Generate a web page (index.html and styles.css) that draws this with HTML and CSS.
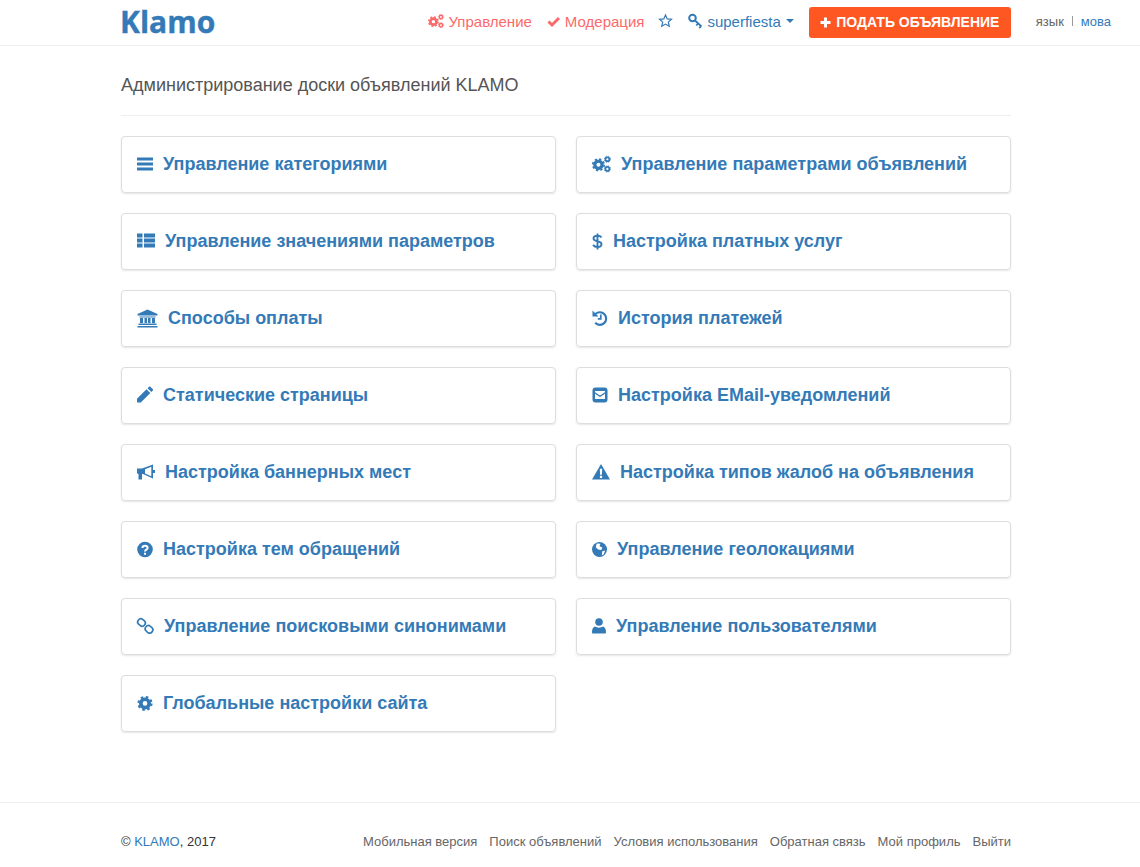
FILE: index.html
```html
<!DOCTYPE html>
<html lang="ru">
<head>
<meta charset="utf-8">
<title>Klamo</title>
<link rel="stylesheet" href="styles.css">
</head>
<body>
<svg class="defs" width="0" height="0" aria-hidden="true">
  <defs>
    <g id="gear">
      <circle cx="0" cy="0" r="4.500" fill="none" stroke="currentColor" stroke-width="4"/>
      <circle cx="0" cy="0" r="7" fill="none" stroke="currentColor" stroke-width="2.200" stroke-dasharray="2.750 2.750"/>
    </g>
    <g id="cogs">
      <g transform="translate(6.800 9.800) scale(.85)"><use href="#gear"/></g>
      <g transform="translate(16.200 4) scale(.46)"><use href="#gear"/></g>
      <g transform="translate(16.200 14.200) scale(.46)"><use href="#gear"/></g>
    </g>
  </defs>
</svg>
<header class="topbar">
  <div class="topbar-inner">
    <a class="logo" href="#">Klamo</a>
    <nav class="topnav">
      <a class="nav-link nav-red nav-manage" href="#"><svg width="16" height="16" viewBox="0 0 20 18"><use href="#cogs"/></svg>Управление</a>
      <a class="nav-link nav-red nav-moder" href="#"><svg width="15" height="16" viewBox="0 0 15 16"><path d="M2.500 8.500l3.500 3.500 7-7" fill="none" stroke="currentColor" stroke-width="3"/></svg>Модерация</a>
      <a class="nav-link nav-star" href="#"><svg width="15" height="16" viewBox="0 0 15 16"><path d="M7.500 2l1.700 3.900 4.300.4-3.200 2.800 1 4.200-3.800-2.200-3.800 2.200 1-4.200L1.500 6.300l4.300-.4z" fill="none" stroke="currentColor" stroke-width="1.200"/></svg></a>
      <a class="nav-link nav-user" href="#"><svg width="15" height="16" viewBox="0 0 15 16"><circle cx="4.500" cy="5" r="3.300" fill="none" stroke="currentColor" stroke-width="2"/><path d="M7 7.500l6.500 6M10 10.500l-1.700 2M13 13.200l-1.700 2" fill="none" stroke="currentColor" stroke-width="1.800"/></svg>superfiesta<span class="caret"></span></a>
      <a class="post-btn" href="#"><svg width="11" height="11" viewBox="0 0 11 11"><path d="M4 0.500h3v3.500h3.500v3H7v3.500H4V7H.5V4H4z" fill="currentColor"/></svg>ПОДАТЬ ОБЪЯВЛЕНИЕ</a>
    </nav>
    <div class="lang">
      <span>язык</span><span class="lang-sep"></span><a href="#">мова</a>
    </div>
  </div>
</header>

<main class="content">
  <h1 class="page-title">Администрирование доски объявлений KLAMO</h1>
  <div class="cards">
    <a class="card" href="#"><svg width="16" height="18" viewBox="0 0 16 18"><path d="M0 2.500h16v3H0zM0 7.500h16v3H0zM0 12.500h16v3H0z" fill="currentColor"/></svg>Управление категориями</a>
    <a class="card" href="#"><svg width="19" height="18" viewBox="0 0 20 18"><use href="#cogs"/></svg>Управление параметрами объявлений</a>

    <a class="card" href="#"><svg width="18" height="18" viewBox="0 0 18 18"><path d="M0 1.500h5.500v4H0zM7 1.500H18v4H7zM0 6.500h5.500v4H0zM7 6.500H18v4H7zM0 11.500h5.500v4H0zM7 11.500H18v4H7z" fill="currentColor"/></svg>Управление значениями параметров</a>
    <a class="card" href="#"><svg width="11" height="18" viewBox="0 0 11 18"><path d="M9.500 5.500C8.700 4.200 7.200 3.700 5.500 3.700 3.300 3.700 1.500 4.700 1.500 6.400c0 3.800 8 1.800 8 5.600 0 1.900-1.900 3-4 3-1.900 0-3.500-.7-4.500-2.100M5.500 1.500v16" fill="none" stroke="currentColor" stroke-width="1.900"/></svg>Настройка платных услуг</a>

    <a class="card" href="#"><svg width="21" height="20" viewBox="0 0 21 20"><path d="M10.500 1.500L20.500 6v1.500H.5V6z" fill="currentColor"/><path d="M2.500 8.500h16v1h-16zM3 10h3v5H3zM7.500 10h2.500v5H7.500zM11 10h2.500v5H11zM15 10h3v5h-3zM1.500 15.500h18V17h-18zM.5 18h20v1.500H.5z" fill="currentColor"/></svg>Способы оплаты</a>
    <a class="card" href="#"><svg width="16" height="18" viewBox="0 0 16 18"><path d="M3.500 5A6.300 6.300 0 1 1 3.200 13.800" fill="none" stroke="currentColor" stroke-width="2.200"/><path d="M.5 1.500V7.500H6.500z" fill="currentColor"/><path d="M8.800 5.500v4.300H5.800" fill="none" stroke="currentColor" stroke-width="1.700"/></svg>История платежей</a>

    <a class="card" href="#"><svg width="16" height="18" viewBox="0 0 16 18"><path d="M0 16.500v-3.800L9.500 3.200l3.800 3.800-9.500 9.500z M10.500 2.200l1.400-1.300c.5-.5 1.200-.5 1.700 0l2.100 2.100c.5.500.5 1.200 0 1.700L14.300 6z" fill="currentColor"/></svg>Статические страницы</a>
    <a class="card" href="#"><svg width="16" height="18" viewBox="0 0 16 18"><rect x=".5" y="1.500" width="15" height="15" rx="3" fill="currentColor"/><path d="M3 5h10v1.300L8 9.500 3 6.300zM3 7.800l5 3.200 5-3.200V13H3z" fill="#fff"/></svg>Настройка EMail-уведомлений</a>

    <a class="card" href="#"><svg width="18" height="18" viewBox="0 0 18 18"><path fill-rule="evenodd" d="M0 5.500h5L16 1.500v14L6 11H5v5.500H1.500V11H1L0 10zM8 6.200v4.400l6.300 2.700V3.800z" fill="currentColor"/><path d="M16 7h2v3h-2z" fill="currentColor"/></svg>Настройка баннерных мест</a>
    <a class="card" href="#"><svg width="18" height="18" viewBox="0 0 18 18"><path d="M9 1L18 16.500H0z" fill="currentColor"/><path d="M7.800 5.800h2.400l-.3 6H8.100zM7.900 12.800h2.200V15H7.900z" fill="#fff"/></svg>Настройка типов жалоб на объявления</a>

    <a class="card" href="#"><svg width="16" height="18" viewBox="0 0 16 18"><circle cx="8" cy="9.500" r="7.800" fill="currentColor"/><path d="M5.500 8C5.500 6.500 6.600 5.700 8 5.700s2.600.9 2.600 2.200c0 1.800-2.600 1.700-2.600 3.600" fill="none" stroke="#fff" stroke-width="2"/><path d="M7 12.700h2v2H7z" fill="#fff"/></svg>Настройка тем обращений</a>
    <a class="card" href="#"><svg width="15" height="18" viewBox="0 0 16 18"><circle cx="8" cy="9.500" r="8" fill="currentColor"/><path d="M5 3l4 .5-1 2.500 3 1.500-1 2.500-3.500-.5L4 7zM11 11.500l3-1-1.500 4-2 1.500z" fill="#fff"/></svg>Управление геолокациями</a>

    <a class="card" href="#"><svg width="17" height="18" viewBox="0 0 17 18"><g fill="none" stroke="currentColor" stroke-width="1.600"><rect x="-4" y="-3.200" width="8" height="6.400" rx="3.200" transform="translate(4.500 5.500) rotate(40)"/><rect x="-4" y="-3.200" width="8" height="6.400" rx="3.200" transform="translate(12 12.300) rotate(40)"/></g></svg>Управление поисковыми синонимами</a>
    <a class="card" href="#"><svg width="14" height="18" viewBox="0 0 14 18"><circle cx="7" cy="5" r="3.800" fill="currentColor"/><path d="M0 15.500c0-1 0-5 3-6 1 .7 2.500 1.200 4 1.200s3-.5 4-1.200c3 1 3 5 3 6 0 .5-.5 1-1 1H1c-.5 0-1-.5-1-1z" fill="currentColor"/></svg>Управление пользователями</a>

    <a class="card" href="#"><svg width="16" height="18" viewBox="0 0 18 18"><g transform="translate(9 9.500) scale(1.050)"><use href="#gear"/></g></svg>Глобальные настройки сайта</a>
  </div>
</main>

<footer class="footer">
  <div class="footer-inner">
    <div class="copy">© <a href="#">KLAMO</a>, 2017</div>
    <nav class="footer-nav">
      <a href="#">Мобильная версия</a>
      <a href="#">Поиск объявлений</a>
      <a href="#">Условия использования</a>
      <a href="#">Обратная связь</a>
      <a href="#">Мой профиль</a>
      <a href="#">Выйти</a>
    </nav>
  </div>
</footer>
</body>
</html>
```

FILE: styles.css
```css
* { box-sizing: border-box; }
html, body { margin: 0; padding: 0; }
body {
  font-family: "Liberation Sans", Arial, sans-serif;
  background: #fff;
  color: #333;
  min-height: 867px;
  display: flex;
  flex-direction: column;
}
a { text-decoration: none; color: #337ab7; }
.defs { display: block; width: 0; height: 0; }

.topbar {
  height: 46px;
  border-bottom: 1px solid #eee;
  padding-left: 121px;
}
.topbar-inner {
  display: flex;
  align-items: flex-start;
  height: 45px;
  width: 990px;
}
.logo {
  font-family: "Open Sans", sans-serif;
  font-weight: 700;
  font-size: 30px;
  line-height: 44px;
  margin-left: -1px;
  -webkit-text-stroke: .4px #337ab7;
}
.topnav {
  margin-left: auto;
  display: flex;
  align-items: center;
  height: 45px;
}
.nav-link {
  display: flex;
  align-items: center;
  gap: 4px;
  font-size: 15px;
  margin: -3px 15px 0 0;
}
.nav-manage, .nav-moder { margin-right: 14px; }
.nav-star { margin-right: 15px; }
.nav-red { color: #fb6a6a; }
.caret {
  width: 0;
  height: 0;
  border-top: 4px solid #337ab7;
  border-left: 4px solid transparent;
  border-right: 4px solid transparent;
  margin-left: 1px;
}
.post-btn {
  display: flex;
  align-items: center;
  justify-content: center;
  gap: 5px;
  width: 202px;
  height: 31px;
  margin-top: -1px;
  background: #ff5722;
  color: #fff;
  font-size: 14px;
  font-weight: 700;
  border-radius: 3px;
}
.lang {
  display: flex;
  align-items: center;
  height: 42px;
  margin-left: 25px;
  font-size: 13px;
  color: #666;
}
.lang-sep {
  width: 1px;
  height: 10px;
  margin: 0 8px;
  background: #999;
}

.content {
  flex: 1;
  width: 890px;
  margin-left: 121px;
}
.page-title {
  margin: 0 0 20px;
  padding: 28px 0 19px;
  border-bottom: 1px solid #eee;
  font-size: 18px;
  font-weight: 400;
  line-height: 22px;
  color: #555;
}
.cards {
  display: grid;
  grid-template-columns: 435px 435px;
  column-gap: 20px;
  row-gap: 20px;
}
.card {
  display: flex;
  align-items: center;
  gap: 10px;
  height: 57px;
  padding: 0 15px;
  border: 1px solid #ddd;
  border-radius: 4px;
  box-shadow: 0 1px 2px rgba(0, 0, 0, .1);
  font-size: 18px;
  font-weight: 700;
  color: #337ab7;
}
.card svg { margin-top: -2px; overflow: visible; }

.footer {
  height: 65px;
  border-top: 1px solid #eee;
  padding: 30px 0 0 121px;
}
.footer-inner {
  display: flex;
  justify-content: space-between;
  width: 890px;
  font-size: 13px;
  line-height: 17px;
}
.footer-nav { display: flex; gap: 12px; }
.footer-nav a { color: #666; }
```
